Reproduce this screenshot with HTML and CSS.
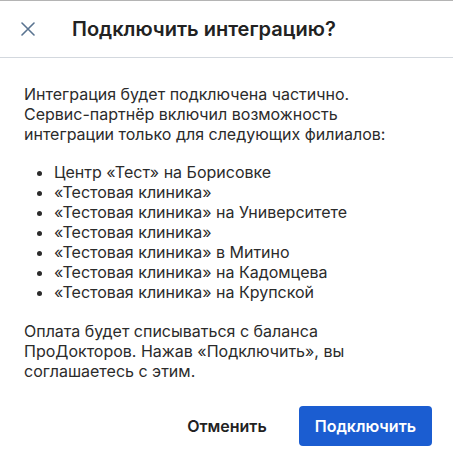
FILE: index.html
```html
<!DOCTYPE html>
<html lang="ru">
  <head>
    <meta charset="utf-8" />
    <title>Подключить интеграцию?</title>
    <meta name="viewport" content="width=device-width, initial-scale=1" />
    <link rel="stylesheet" href="styles.css">
  </head>
  <body>
    <div class="modal">
      <div class="modal-header">
        <button class="close-btn" aria-label="Закрыть">
          <svg width="14" height="14" viewBox="0 0 14 14">
            <path d="M1 1L13 13M13 1L1 13" stroke="#5a7491" stroke-width="1.6" stroke-linecap="round" />
          </svg>
        </button>
        <h1 class="modal-title">Подключить интеграцию?</h1>
      </div>
      <div class="modal-body">
        <p>Интеграция будет подключена частично. Сервис-партнёр включил возможность интеграции только для следующих филиалов:</p>
        <ul class="branch-list">
          <li>Центр «Тест» на Борисовке</li>
          <li>«Тестовая клиника»</li>
          <li>«Тестовая клиника» на Университете</li>
          <li>«Тестовая клиника»</li>
          <li>«Тестовая клиника» в Митино</li>
          <li>«Тестовая клиника» на Кадомцева</li>
          <li>«Тестовая клиника» на Крупской</li>
        </ul>
        <p>Оплата будет списываться с баланса ПроДокторов. Нажав «Подключить», вы соглашаетесь с этим.</p>
      </div>
      <div class="modal-footer">
        <button class="btn btn-text">Отменить</button>
        <button class="btn btn-primary">Подключить</button>
      </div>
    </div>
  </body>
</html>
```

FILE: styles.css
```css
body {
  margin: 0;
  background: #fff;
  font-family: 'Inter', 'Roboto', sans-serif;
  color: #222;
}
.modal {
  width: 453px;
  height: 469px;
  box-sizing: border-box;
  border-top: 1px solid #b4b4b4;
}
.modal-header {
  display: flex;
  align-items: center;
  height: 56px;
  border-bottom: 1px solid #d3d8de;
}
.close-btn {
  width: 24px;
  height: 24px;
  margin-left: 16px;
  padding: 0;
  border: 0;
  background: none;
  display: flex;
  align-items: center;
  justify-content: center;
}
.modal-title {
  margin: 0 0 0 32px;
  font-size: 20px;
  font-weight: 600;
  color: #222;
}
.modal-body {
  max-width: 370px;
  padding: 26px 24px 0;
  font-size: 16px;
  line-height: 20px;
  color: #2b2b2b;
}
.modal-body p {
  margin: 0;
}
.branch-list {
  margin: 18px 0 19px;
  padding-left: 30px;
}
.modal-footer {
  display: flex;
  justify-content: flex-end;
  align-items: center;
  gap: 16px;
  padding: 25px 21px 0;
}
.btn {
  font-family: inherit;
  font-size: 16px;
  font-weight: 600;
  height: 40px;
  border: 0;
  border-radius: 4px;
  padding: 0 16px;
}
.btn-text {
  background: none;
  color: #222;
}
.btn-primary {
  background: #1b5dd1;
  color: #fff;
}
```
